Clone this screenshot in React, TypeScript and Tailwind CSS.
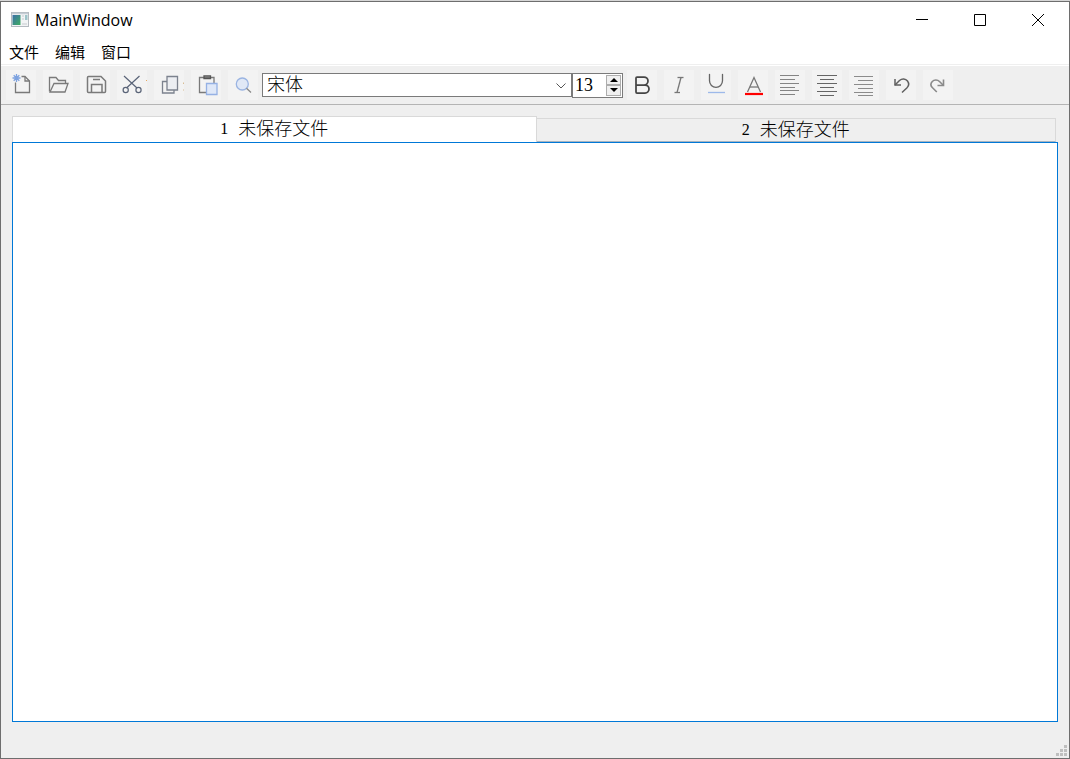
import { useState } from "react";
import type { ReactNode } from "react";
import { Bold, Underline } from "lucide-react";

const serif =
  "font-['Liberation_Serif','Noto_Sans_CJK_SC',serif] font-light text-[18px]";

type IconProps = {
  color?: string;
  width?: number;
  children: ReactNode;
};

function Icon({ color = "#7a7a7a", width = 1.3, children }: IconProps) {
  return (
    <svg
      viewBox="0 0 30 30"
      className="size-[30px]"
      fill="none"
      stroke={color}
      strokeWidth={width}
      aria-hidden="true"
    >
      {children}
    </svg>
  );
}

function ToolButton({ label, children }: { label: string; children: ReactNode }) {
  return (
    <button
      type="button"
      aria-label={label}
      className="flex size-[30px] shrink-0 items-center justify-center bg-[#f3f3f3] hover:bg-[#e5f1fb]"
    >
      {children}
    </button>
  );
}

const fileTools = [
  {
    label: "新建",
    icon: (
      <Icon>
        <path d="M15.5 6.5h3.5l4.5 4.5v11.5h-14v-10" />
        <path d="M19 6.5v4.5h4.5" />
        <path
          d="M10.5 4v8M6.5 8h8M7.7 5.2l5.6 5.6M13.3 5.2l-5.6 5.6"
          stroke="#7da2e0"
          strokeWidth="1.3"
        />
      </Icon>
    ),
  },
  {
    label: "打开",
    icon: (
      <Icon>
        <path d="M6.5 21.5V7.5h6.5l2.5 3h7v3" />
        <path d="M11 13.5h14l-3 8.5H7z" />
      </Icon>
    ),
  },
  {
    label: "保存",
    icon: (
      <Icon width={1.5}>
        <path d="M7.5 7.5a1 1 0 0 1 1-1h12.5l4.5 4.5v10.5a1 1 0 0 1-1 1h-16a1 1 0 0 1-1-1z" />
        <path d="M11.5 22v-7.5h10.5V22M13 9.5h7" />
      </Icon>
    ),
  },
  {
    label: "剪切",
    icon: (
      <Icon color="#5a6478" width={1.2}>
        <path d="M7 6l13 12M22.5 6l-13 12" />
        <circle cx="8.7" cy="20" r="2.6" />
        <circle cx="21.5" cy="20" r="2.6" />
        <path d="M29.5 10v1" stroke="#e8a860" strokeWidth="1" />
      </Icon>
    ),
  },
  {
    label: "复制",
    icon: (
      <Icon color="#7c828e">
        <path d="M13 11.5H8.5V23H20v-3" />
        <path d="M13 6.5h10.5V20H13z" fill="#eceef2" />
        <path d="M29.5 12.5V14M29.5 19.5v1" stroke="#d8bc94" strokeWidth="1" />
      </Icon>
    ),
  },
  {
    label: "粘贴",
    icon: (
      <Icon>
        <path d="M15 22.5H8.5v-15H23V13" />
        <path d="M13 6h6.5v2.5H13z" stroke="#555" />
        <path d="M15.5 13.5H26v11H15.5z" fill="#dfe8f8" stroke="#95b1e4" />
      </Icon>
    ),
  },
  {
    label: "查找",
    icon: (
      <Icon color="#9ab4e2">
        <circle cx="14.3" cy="14" r="6" fill="#e0e8f6" />
        <path d="M18.5 18.2l4.5 4.3" stroke="#888" />
      </Icon>
    ),
  },
];

const formatTools = [
  { label: "加粗", icon: <Bold size={24} strokeWidth={1.75} color="#454545" /> },
  {
    label: "斜体",
    icon: (
      <Icon color="#777">
        <line x1="13.5" y1="7.5" x2="19.5" y2="7.5" />
        <line x1="17" y1="7.5" x2="13" y2="22.5" />
        <line x1="10.5" y1="22.5" x2="16" y2="22.5" />
      </Icon>
    ),
  },
  {
    label: "下划线",
    icon: (
      <Icon color="#666">
        <Underline x="2" y="0" size={26} strokeWidth={1.2} color="#666">
          <path d="M3.5 20.5h17" stroke="#f3f3f3" strokeWidth="3" />
        </Underline>
        <path d="M7 22.5h17" stroke="#9db9ea" strokeWidth="1.3" />
      </Icon>
    ),
  },
  {
    label: "字体颜色",
    icon: (
      <Icon color="#777">
        <polyline points="9.5,22 16,7.5 22.5,22" />
        <line x1="12" y1="17" x2="20" y2="17" />
        <line x1="7" y1="24" x2="25" y2="24" stroke="#f00" strokeWidth="2.2" />
      </Icon>
    ),
  },
  {
    label: "左对齐",
    icon: (
      <Icon color="#858585" width={1.2}>
        <path d="M5 5.5h19M5 9.5h15M5 13.5h19M5 17.5h15M5 20.5h19M5 24.5h15" />
      </Icon>
    ),
  },
  {
    label: "居中",
    icon: (
      <Icon color="#666" width={1}>
        <path d="M5 5.5h20M8 9.5h14M5 13.5h20M8 17.5h14M5 21.5h20M8 25.5h14" />
      </Icon>
    ),
  },
  {
    label: "右对齐",
    icon: (
      <Icon color="#8c8c8c" width={1.2}>
        <path d="M5 6.5h19M9 10.5h15M5 14.5h19M9 18.5h15M5 22.5h19M9 25.5h15" />
      </Icon>
    ),
  },
  {
    label: "撤销",
    icon: (
      <Icon color="#606060" width={1.5}>
        <path d="M9 9v6h6" />
        <path d="M9 15l4.5-4.5c2.5-2.2 6-2 8 .5 1.8 2.5 1.3 5-.7 7L16 22.5" />
      </Icon>
    ),
  },
  {
    label: "重做",
    icon: (
      <Icon color="#8a8a8a" width={1.6}>
        <path d="M20.5 9.5v6h-6" />
        <path d="M20.5 15.5l-4-4c-2-2-5.500-1.800-7.200 0-1.800 2-1.500 4.500 0 6l4.500 4.500" />
      </Icon>
    ),
  },
];

const tabs = ["未保存文件", "未保存文件"];

function TitleBar() {
  const control =
    "flex w-[58px] items-center justify-center hover:bg-[#e5e5e5]";
  return (
    <header className="flex h-9 items-stretch justify-between pr-0.5 pl-2.5">
      <div className="flex items-center gap-1.5">
        <svg width="18" height="16" viewBox="0 0 18 16" aria-hidden="true">
          <defs>
            <linearGradient id="app" x1="0" y1="0" x2="1" y2="1">
              <stop offset="0" stopColor="#3c6fa8" />
              <stop offset="1" stopColor="#3fae62" />
            </linearGradient>
          </defs>
          <rect x=".5" y=".5" width="17" height="14" fill="#f2f4f5" stroke="#b4bac0" />
          <path d="M1 1.5h16" stroke="#c5ccd4" strokeWidth="1.5" />
          <rect x="1.5" y="3" width="8" height="10" fill="url(#app)" />
          <path d="M11 4h2M11 7h2M11 12h5" stroke="#c5cacf" />
          <rect x="14" y="3" width="2.5" height="5" fill="#9ec4c9" />
        </svg>
        <h1 className="text-[16px] leading-5">MainWindow</h1>
      </div>
      <div className="flex">
        <button type="button" aria-label="最小化" className={control}>
          <svg width="12" height="12" stroke="#000" aria-hidden="true">
            <path d="M0 5.5h12" />
          </svg>
        </button>
        <button type="button" aria-label="最大化" className={control}>
          <svg width="12" height="12" stroke="#000" fill="none" aria-hidden="true">
            <path d="M.5.5h11v11H.5z" />
          </svg>
        </button>
        <button type="button" aria-label="关闭" className={control}>
          <svg width="12" height="12" stroke="#000" aria-hidden="true">
            <path d="M0 0l12 12M12 0L0 12" />
          </svg>
        </button>
      </div>
    </header>
  );
}

function ToolBar() {
  const [size, setSize] = useState(13);
  const step =
    "flex min-h-0 flex-1 items-center justify-center border border-[#adadad] bg-[#f0f0f0]";
  return (
    <div
      role="toolbar"
      className="flex h-[39px] items-center border-b border-[#b4b4b4] bg-[#efefef] pl-[5px]"
    >
      <div className="flex gap-[7px]">
        {fileTools.map((tool) => (
          <ToolButton key={tool.label} label={tool.label}>
            {tool.icon}
          </ToolButton>
        ))}
      </div>
      <div className="relative ml-1 w-[310px]">
        <select
          aria-label="字体"
          className={`block h-6 w-full appearance-none border border-[#7a7a7a] bg-white pl-1 leading-5 ${serif}`}
        >
          <option>宋体</option>
        </select>
        <svg
          width="10"
          height="6"
          className="pointer-events-none absolute top-2.5 right-1.5"
          fill="none"
          stroke="#555"
          aria-hidden="true"
        >
          <path d="M.5.5L5 5 9.500.5" />
        </svg>
      </div>
      <div className="flex h-[25px] w-[51px] border border-[#7a7a7a] bg-white p-px">
        <input
          type="text"
          aria-label="字号"
          value={size}
          onChange={(e) => setSize(Number(e.target.value) || 0)}
          className={`min-w-0 flex-1 pl-px leading-5 outline-none ${serif}`}
        />
        <div className="flex w-[15px] flex-col">
          <button
            type="button"
            aria-label="增大"
            onClick={() => setSize((s) => s + 1)}
            className={step}
          >
            <svg width="8" height="4" aria-hidden="true">
              <path d="M0 4l4-4 4 4z" />
            </svg>
          </button>
          <button
            type="button"
            aria-label="减小"
            onClick={() => setSize((s) => s - 1)}
            className={step}
          >
            <svg width="8" height="4" aria-hidden="true">
              <path d="M0 0l4 4 4-4z" />
            </svg>
          </button>
        </div>
      </div>
      <div className="ml-1 flex gap-[7px]">
        {formatTools.map((tool) => (
          <ToolButton key={tool.label} label={tool.label}>
            {tool.icon}
          </ToolButton>
        ))}
      </div>
    </div>
  );
}

export default function App() {
  const [active, setActive] = useState(0);
  const [texts, setTexts] = useState(["", ""]);

  return (
    <div className="flex min-h-screen flex-col bg-[#d6d6d6] pt-px font-['Open_Sans','Noto_Sans_CJK_SC',sans-serif] text-black">
      <div className="flex flex-1 flex-col border border-[#6e6e6e] bg-[#efefef]">
        <div className="border-b border-[#efefef] bg-white">
          <TitleBar />
          <nav className="flex h-[26px] items-center gap-4 pt-0.5 pl-2 text-[15px] leading-5">
            <button type="button">文件</button>
            <button type="button">编辑</button>
            <button type="button">窗口</button>
          </nav>
        </div>
        <div className="h-px bg-white" />
        <ToolBar />

        <main className="flex flex-1 flex-col px-[11px] pt-[11px]">
          <div role="tablist" className="flex h-[26px] items-end pr-0.5">
            {tabs.map((title, i) => (
              <button
                key={i}
                type="button"
                role="tab"
                aria-selected={i === active}
                onClick={() => setActive(i)}
                className={`flex items-center justify-center border border-[#d9d9d9] pb-px leading-5 ${serif} ${
                  i === active
                    ? "h-[26px] flex-[1_1_6px] border-b-0 bg-white"
                    : "h-6 flex-[1_1_0px] border-b-[#a8b4bf] border-l-0 bg-[#efefef]"
                }`}
              >
                <span className="mr-2.5 text-[16px]">{i + 1}</span>
                <span>{title}</span>
              </button>
            ))}
          </div>
          <textarea
            aria-label="文档"
            value={texts[active]}
            onChange={(e) =>
              setTexts((t) => t.map((v, i) => (i === active ? e.target.value : v)))
            }
            className={`block w-full flex-1 resize-none border border-[#0078d7] bg-white p-1 outline-none ${serif}`}
          />
        </main>

        <footer className="flex h-9 items-end justify-end p-0.5">
          <svg width="11" height="11" fill="#bfbfbf" aria-hidden="true">
            <path d="M8 0h3v3H8zM4 4h3v3H4zM8 4h3v3H8zM0 8h3v3H0zM4 8h3v3H4zM8 8h3v3H8z" />
          </svg>
        </footer>
      </div>
    </div>
  );
}
